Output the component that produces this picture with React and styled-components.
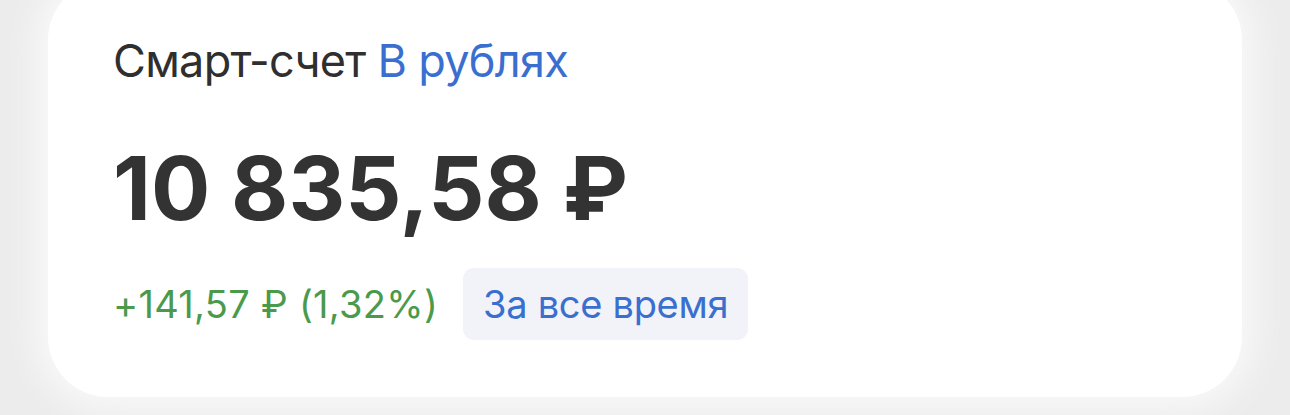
import React from "react";
import styled, { createGlobalStyle } from "styled-components";

const Global = createGlobalStyle`
  html, body { margin: 0; padding: 0; }
  body {
    background: #ececed;
    font-family: Inter, "Noto Sans", sans-serif;
    width: 1290px;
    height: 415px;
    overflow: hidden;
  }
`;

const Page = styled.div`
  width: 1290px;
  height: 415px;
  padding: 0 48px;
  box-sizing: border-box;
`;

const Card = styled.div`
  margin-top: -20px;
  background: #ffffff;
  border-radius: 60px;
  box-sizing: border-box;
  padding: 58px 65px 57px 65px;
  box-shadow: 0 0 36px 12px rgba(250, 250, 250, 0.95);
  display: flex;
  flex-direction: column;
  align-items: flex-start;
`;

const Title = styled.div`
  font-size: 45px;
  line-height: 1;
  color: #2f2f2f;
  letter-spacing: -0.7px;
  white-space: nowrap;
`;

const Accent = styled.span`
  color: #3a6fcf;
`;

const Amount = styled.div`
  margin-top: 61px;
  font-size: 88px;
  line-height: 1;
  font-weight: 700;
  color: #333333;
  letter-spacing: 0;
  white-space: nowrap;
`;

const Row = styled.div`
  margin-top: 36px;
  display: flex;
  align-items: center;
  gap: 25px;
`;

const Change = styled.span`
  font-size: 38px;
  line-height: 1;
  color: #4b9a4c;
  letter-spacing: 0.3px;
  white-space: nowrap;
`;

const Pill = styled.span`
  background: #f1f3f8;
  color: #3a6fcf;
  font-size: 38px;
  line-height: 1;
  border-radius: 11px;
  height: 72px;
  display: inline-flex;
  align-items: center;
  padding: 0 20px;
  letter-spacing: -0.3px;
  white-space: nowrap;
`;

export default function App() {
  return (
    <>
      <Global />
      <Page>
        <Card>
          <Title>
            Смарт-счет <Accent>В рублях</Accent>
          </Title>
          <Amount>10 835,58 ₽</Amount>
          <Row>
            <Change>+141,57 ₽ (1,32%)</Change>
            <Pill>За все время</Pill>
          </Row>
        </Card>
      </Page>
    </>
  );
}
